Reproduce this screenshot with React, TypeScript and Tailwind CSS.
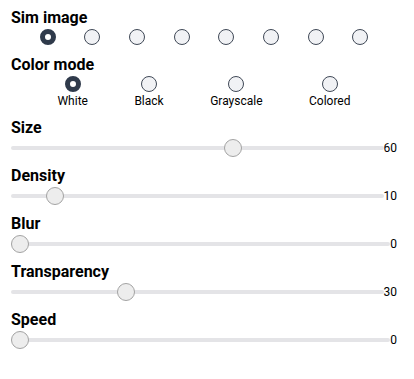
import React from "react";

const font = { fontFamily: "Roboto, 'Noto Sans', Arial, sans-serif" };

function Radio({ checked }: { checked: boolean }) {
  return checked ? (
    <div className="w-4 h-4 rounded-full border-[5px] border-[#2f3a4b] bg-white box-border" />
  ) : (
    <div className="w-4 h-4 rounded-full border-[1.5px] border-[#3f4856] bg-[#f1f2f5] box-border" />
  );
}

function Heading({ children }: { children: React.ReactNode }) {
  return <div className="h-5 leading-5 text-base font-bold text-black">{children}</div>;
}

function Slider({ label, value }: { label: string; value: number }) {
  const p = value / 100;
  return (
    <div className="mb-[9px]">
      <Heading>{label}</Heading>
      <div className="mt-px h-[18px] flex items-center">
        <div className="relative flex-1 h-[18px] flex items-center">
          <div className="w-full h-1 bg-[#e4e4e7] rounded-full" />
          <div
            className="absolute top-0 w-[18px] h-[18px] rounded-full bg-[#ededed] border border-[#a3a3a3] box-border"
            style={{ left: `calc(${p} * (100% - 18px))` }}
          />
        </div>
        <div className="text-xs leading-4 text-black">{value}</div>
      </div>
    </div>
  );
}

export default function App() {
  const modes = ["White", "Black", "Grayscale", "Colored"];
  return (
    <div className="w-[414px] h-[379px] bg-white pl-[11px] pr-[17px] pt-2" style={font}>
      <Heading>Sim image</Heading>
      <div className="mt-px h-4 flex justify-evenly mb-[10px]">
        {Array.from({ length: 8 }).map((_, i) => (
          <Radio key={i} checked={i === 0} />
        ))}
      </div>
      <Heading>Color mode</Heading>
      <div className="mt-px flex justify-evenly mb-[9px]">
        {modes.map((m, i) => (
          <div key={m} className="flex flex-col items-center">
            <Radio checked={i === 0} />
            <div className="text-xs leading-4 pt-px text-black">{m}</div>
          </div>
        ))}
      </div>
      <Slider label="Size" value={60} />
      <Slider label="Density" value={10} />
      <Slider label="Blur" value={0} />
      <Slider label="Transparency" value={30} />
      <Slider label="Speed" value={0} />
    </div>
  );
}
